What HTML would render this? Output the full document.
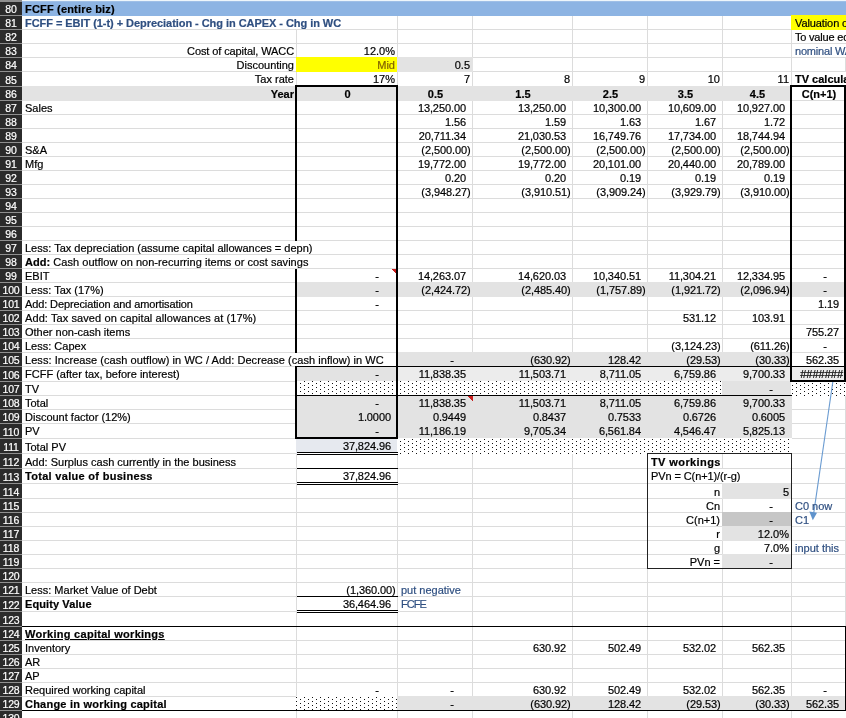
<!DOCTYPE html>
<html><head><meta charset="utf-8"><title>FCFF</title>
<style>
html,body{margin:0;padding:0;background:#fff}
#s{position:relative;width:846px;height:718px;overflow:hidden;background:#fff;font-family:"Liberation Sans",Arial,sans-serif;font-size:11px;color:#000}
#s svg{position:absolute;left:0;top:0}
.c{-webkit-text-stroke:0.2px;position:absolute;height:14px;line-height:14px;white-space:nowrap;padding:0 2px 0 3px;box-sizing:border-box;overflow:visible}
.c i{visibility:hidden;font-style:normal;padding-right:1px}
.n{letter-spacing:-0.1px;padding-right:1.5px}
.rh{position:absolute;left:0;width:22px;background:#2b2b2b;color:#fff;text-align:center;font-size:10.5px;letter-spacing:-0.15px;-webkit-text-stroke:0.2px #fff;box-sizing:content-box;white-space:nowrap;overflow:hidden}
#t{position:absolute;left:0;top:0;width:846px;height:718px;will-change:transform}
#hb{position:absolute;left:0;top:0;width:22px;height:718px;background:#8f8f8f}
</style></head><body>
<div id="s">
<svg width="846" height="718" viewBox="0 0 846 718" shape-rendering="crispEdges">
<defs><pattern id="dots" width="8" height="4" patternUnits="userSpaceOnUse"><rect width="8" height="4" fill="#fff"/><rect x="4" y="3" width="1" height="1" fill="#111"/><rect x="0" y="1" width="1" height="1" fill="#111"/></pattern></defs>
<rect x="22" y="1" width="824" height="1" fill="#dcdcdc"/>
<rect x="22" y="15" width="824" height="1" fill="#dcdcdc"/>
<rect x="22" y="29" width="824" height="1" fill="#dcdcdc"/>
<rect x="22" y="43" width="824" height="1" fill="#dcdcdc"/>
<rect x="22" y="57" width="824" height="1" fill="#dcdcdc"/>
<rect x="22" y="71" width="824" height="1" fill="#dcdcdc"/>
<rect x="22" y="86" width="824" height="1" fill="#dcdcdc"/>
<rect x="22" y="100" width="824" height="1" fill="#dcdcdc"/>
<rect x="22" y="114" width="824" height="1" fill="#dcdcdc"/>
<rect x="22" y="128" width="824" height="1" fill="#dcdcdc"/>
<rect x="22" y="142" width="824" height="1" fill="#dcdcdc"/>
<rect x="22" y="156" width="824" height="1" fill="#dcdcdc"/>
<rect x="22" y="170" width="824" height="1" fill="#dcdcdc"/>
<rect x="22" y="184" width="824" height="1" fill="#dcdcdc"/>
<rect x="22" y="198" width="824" height="1" fill="#dcdcdc"/>
<rect x="22" y="212" width="824" height="1" fill="#dcdcdc"/>
<rect x="22" y="226" width="824" height="1" fill="#dcdcdc"/>
<rect x="22" y="240" width="824" height="1" fill="#dcdcdc"/>
<rect x="22" y="254" width="824" height="1" fill="#dcdcdc"/>
<rect x="22" y="268" width="824" height="1" fill="#dcdcdc"/>
<rect x="22" y="282" width="824" height="1" fill="#dcdcdc"/>
<rect x="22" y="296" width="824" height="1" fill="#dcdcdc"/>
<rect x="22" y="310" width="824" height="1" fill="#dcdcdc"/>
<rect x="22" y="324" width="824" height="1" fill="#dcdcdc"/>
<rect x="22" y="338" width="824" height="1" fill="#dcdcdc"/>
<rect x="22" y="352" width="824" height="1" fill="#dcdcdc"/>
<rect x="22" y="366" width="824" height="1" fill="#dcdcdc"/>
<rect x="22" y="381" width="824" height="1" fill="#dcdcdc"/>
<rect x="22" y="395" width="824" height="1" fill="#dcdcdc"/>
<rect x="22" y="409" width="824" height="1" fill="#dcdcdc"/>
<rect x="22" y="423" width="824" height="1" fill="#dcdcdc"/>
<rect x="22" y="438" width="824" height="1" fill="#dcdcdc"/>
<rect x="22" y="453" width="824" height="1" fill="#dcdcdc"/>
<rect x="22" y="468" width="824" height="1" fill="#dcdcdc"/>
<rect x="22" y="483" width="824" height="1" fill="#dcdcdc"/>
<rect x="22" y="498" width="824" height="1" fill="#dcdcdc"/>
<rect x="22" y="512" width="824" height="1" fill="#dcdcdc"/>
<rect x="22" y="526" width="824" height="1" fill="#dcdcdc"/>
<rect x="22" y="540" width="824" height="1" fill="#dcdcdc"/>
<rect x="22" y="554" width="824" height="1" fill="#dcdcdc"/>
<rect x="22" y="568" width="824" height="1" fill="#dcdcdc"/>
<rect x="22" y="582" width="824" height="1" fill="#dcdcdc"/>
<rect x="22" y="596" width="824" height="1" fill="#dcdcdc"/>
<rect x="22" y="611" width="824" height="1" fill="#dcdcdc"/>
<rect x="22" y="626" width="824" height="1" fill="#dcdcdc"/>
<rect x="22" y="640" width="824" height="1" fill="#dcdcdc"/>
<rect x="22" y="654" width="824" height="1" fill="#dcdcdc"/>
<rect x="22" y="668" width="824" height="1" fill="#dcdcdc"/>
<rect x="22" y="682" width="824" height="1" fill="#dcdcdc"/>
<rect x="22" y="696" width="824" height="1" fill="#dcdcdc"/>
<rect x="22" y="710" width="824" height="1" fill="#dcdcdc"/>
<rect x="296" y="2" width="1" height="716" fill="#dcdcdc"/>
<rect x="397" y="2" width="1" height="716" fill="#dcdcdc"/>
<rect x="472" y="2" width="1" height="716" fill="#dcdcdc"/>
<rect x="572" y="2" width="1" height="716" fill="#dcdcdc"/>
<rect x="647" y="2" width="1" height="716" fill="#dcdcdc"/>
<rect x="722" y="2" width="1" height="716" fill="#dcdcdc"/>
<rect x="791" y="2" width="1" height="716" fill="#dcdcdc"/>
<rect x="845" y="58" width="1" height="14" fill="#dcdcdc"/>
<rect x="845" y="396" width="1" height="230" fill="#dcdcdc"/>
<rect x="296" y="16" width="1" height="13" fill="#fff"/>
<rect x="296" y="241" width="1" height="13" fill="#fff"/>
<rect x="296" y="255" width="1" height="13" fill="#fff"/>
<rect x="296" y="353" width="1" height="13" fill="#fff"/>
<rect x="722" y="469" width="1" height="14" fill="#fff"/>
<rect x="22" y="2" width="824" height="14" fill="#8db4e3"/>
<rect x="0" y="0" width="846" height="1" fill="#eef6fb"/>
<rect x="22" y="1" width="824" height="1" fill="#9fbfe6"/>
<rect x="791" y="15" width="55" height="15" fill="#ffff00"/>
<rect x="296" y="57" width="102" height="15" fill="#ffff00"/>
<rect x="397" y="57" width="76" height="15" fill="#e3e3e3"/>
<rect x="21" y="86" width="771" height="15" fill="#e3e3e3"/>
<rect x="296" y="282" width="550" height="15" fill="#e3e3e3"/>
<rect x="397" y="352" width="395" height="15" fill="#e3e3e3"/>
<rect x="296" y="366" width="102" height="16" fill="#e3e3e3"/>
<rect x="397" y="366" width="449" height="16" fill="#ececec"/>
<rect x="296" y="381" width="427" height="15" fill="url(#dots)"/>
<rect x="722" y="381" width="70" height="15" fill="#e3e3e3"/>
<rect x="791" y="381" width="55" height="15" fill="url(#dots)"/>
<rect x="296" y="395" width="496" height="44" fill="#e3e3e3"/>
<rect x="296" y="438" width="102" height="16" fill="#e6e9ef"/>
<rect x="397" y="438" width="395" height="16" fill="url(#dots)"/>
<rect x="722" y="483" width="70" height="16" fill="#e3e3e3"/>
<rect x="722" y="512" width="70" height="15" fill="#c6c6c6"/>
<rect x="722" y="526" width="70" height="15" fill="#e3e3e3"/>
<rect x="722" y="554" width="70" height="15" fill="#e3e3e3"/>
<rect x="296" y="696" width="102" height="15" fill="url(#dots)"/>
<rect x="397" y="696" width="449" height="15" fill="#e3e3e3"/>
<rect x="295" y="85" width="103" height="2" fill="#000"/>
<rect x="295" y="85" width="2" height="156" fill="#000"/>
<rect x="295" y="269" width="2" height="84" fill="#000"/>
<rect x="295" y="366" width="2" height="73" fill="#000"/>
<rect x="396" y="85" width="2" height="354" fill="#000"/>
<rect x="295" y="437" width="103" height="2" fill="#000"/>
<rect x="297" y="366" width="493" height="1" fill="#000"/>
<rect x="297" y="395" width="495" height="1" fill="#000"/>
<rect x="790" y="85" width="56" height="2" fill="#000"/>
<rect x="790" y="85" width="2" height="297" fill="#000"/>
<rect x="844" y="85" width="2" height="297" fill="#000"/>
<rect x="790" y="380" width="56" height="2" fill="#000"/>
<rect x="792" y="366" width="52" height="1" fill="#000"/>
<rect x="297" y="452" width="101" height="1" fill="#000"/>
<rect x="297" y="454" width="101" height="1" fill="#000"/>
<rect x="297" y="453" width="101" height="1" fill="#fff"/>
<rect x="297" y="468" width="101" height="1" fill="#000"/>
<rect x="297" y="482" width="101" height="1" fill="#000"/>
<rect x="297" y="484" width="101" height="1" fill="#000"/>
<rect x="297" y="483" width="101" height="1" fill="#fff"/>
<rect x="297" y="596" width="101" height="1" fill="#000"/>
<rect x="297" y="610" width="101" height="1" fill="#000"/>
<rect x="297" y="612" width="101" height="1" fill="#000"/>
<rect x="297" y="611" width="101" height="1" fill="#fff"/>
<rect x="647" y="453" width="145" height="1" fill="#222"/>
<rect x="647" y="568" width="145" height="1" fill="#222"/>
<rect x="647" y="453" width="1" height="116" fill="#222"/>
<rect x="791" y="453" width="1" height="116" fill="#222"/>
<rect x="22" y="626" width="824" height="1" fill="#000"/>
<rect x="22" y="710" width="824" height="1" fill="#000"/>
<rect x="845" y="626" width="1" height="85" fill="#000"/>
<polygon points="391,269 396,269 396,274" fill="#c81e1e"/>
<polygon points="467.5,396 472.5,396 472.5,401" fill="#c81e1e"/>
<g shape-rendering="auto"><line x1="832.8" y1="382" x2="813.6" y2="514" stroke="#6a9bd1" stroke-width="1.1"/><polygon points="812.8,520.3 809.3,511.6 817.0,512.8" fill="#5f93cc"/></g>
</svg>
<div id="t">
<div id="hb"></div>
<div class="rh" style="top:2px;height:13px;line-height:15px;padding-top:0px">80</div>
<div class="rh" style="top:16px;height:13px;line-height:15px;padding-top:0px">81</div>
<div class="rh" style="top:30px;height:13px;line-height:15px;padding-top:0px">82</div>
<div class="rh" style="top:44px;height:13px;line-height:15px;padding-top:0px">83</div>
<div class="rh" style="top:58px;height:13px;line-height:15px;padding-top:0px">84</div>
<div class="rh" style="top:72px;height:14px;line-height:16px;padding-top:0px">85</div>
<div class="rh" style="top:87px;height:13px;line-height:15px;padding-top:0px">86</div>
<div class="rh" style="top:101px;height:13px;line-height:15px;padding-top:0px">87</div>
<div class="rh" style="top:115px;height:13px;line-height:15px;padding-top:0px">88</div>
<div class="rh" style="top:129px;height:13px;line-height:15px;padding-top:0px">89</div>
<div class="rh" style="top:143px;height:13px;line-height:15px;padding-top:0px">90</div>
<div class="rh" style="top:157px;height:13px;line-height:15px;padding-top:0px">91</div>
<div class="rh" style="top:171px;height:13px;line-height:15px;padding-top:0px">92</div>
<div class="rh" style="top:185px;height:13px;line-height:15px;padding-top:0px">93</div>
<div class="rh" style="top:199px;height:13px;line-height:15px;padding-top:0px">94</div>
<div class="rh" style="top:213px;height:13px;line-height:15px;padding-top:0px">95</div>
<div class="rh" style="top:227px;height:13px;line-height:15px;padding-top:0px">96</div>
<div class="rh" style="top:241px;height:13px;line-height:15px;padding-top:0px">97</div>
<div class="rh" style="top:255px;height:13px;line-height:15px;padding-top:0px">98</div>
<div class="rh" style="top:269px;height:13px;line-height:15px;padding-top:0px">99</div>
<div class="rh" style="top:283px;height:13px;line-height:15px;padding-top:0px">100</div>
<div class="rh" style="top:297px;height:13px;line-height:15px;padding-top:0px">101</div>
<div class="rh" style="top:311px;height:13px;line-height:15px;padding-top:0px">102</div>
<div class="rh" style="top:325px;height:13px;line-height:15px;padding-top:0px">103</div>
<div class="rh" style="top:339px;height:13px;line-height:15px;padding-top:0px">104</div>
<div class="rh" style="top:353px;height:13px;line-height:15px;padding-top:0px">105</div>
<div class="rh" style="top:367px;height:14px;line-height:16px;padding-top:0px">106</div>
<div class="rh" style="top:382px;height:13px;line-height:15px;padding-top:0px">107</div>
<div class="rh" style="top:396px;height:13px;line-height:15px;padding-top:0px">108</div>
<div class="rh" style="top:410px;height:13px;line-height:15px;padding-top:0px">109</div>
<div class="rh" style="top:424px;height:14px;line-height:16px;padding-top:0px">110</div>
<div class="rh" style="top:439px;height:14px;line-height:16px;padding-top:0px">111</div>
<div class="rh" style="top:454px;height:14px;line-height:16px;padding-top:0px">112</div>
<div class="rh" style="top:469px;height:14px;line-height:16px;padding-top:0px">113</div>
<div class="rh" style="top:484px;height:14px;line-height:16px;padding-top:0px">114</div>
<div class="rh" style="top:499px;height:13px;line-height:15px;padding-top:0px">115</div>
<div class="rh" style="top:513px;height:13px;line-height:15px;padding-top:0px">116</div>
<div class="rh" style="top:527px;height:13px;line-height:15px;padding-top:0px">117</div>
<div class="rh" style="top:541px;height:13px;line-height:15px;padding-top:0px">118</div>
<div class="rh" style="top:555px;height:13px;line-height:15px;padding-top:0px">119</div>
<div class="rh" style="top:569px;height:13px;line-height:15px;padding-top:0px">120</div>
<div class="rh" style="top:583px;height:13px;line-height:15px;padding-top:0px">121</div>
<div class="rh" style="top:597px;height:14px;line-height:16px;padding-top:0px">122</div>
<div class="rh" style="top:612px;height:14px;line-height:16px;padding-top:0px">123</div>
<div class="rh" style="top:627px;height:13px;line-height:15px;padding-top:0px">124</div>
<div class="rh" style="top:641px;height:13px;line-height:15px;padding-top:0px">125</div>
<div class="rh" style="top:655px;height:13px;line-height:15px;padding-top:0px">126</div>
<div class="rh" style="top:669px;height:13px;line-height:15px;padding-top:0px">127</div>
<div class="rh" style="top:683px;height:13px;line-height:15px;padding-top:0px">128</div>
<div class="rh" style="top:697px;height:13px;line-height:15px;padding-top:0px">129</div>
<div class="rh" style="top:711px;height:13px;line-height:15px;padding-top:0px">130</div>
<div class="c" style="left:22px;top:2px;width:823px;font-weight:bold;letter-spacing:0.18px;">FCFF (entire biz)</div>
<div class="c" style="left:22px;top:16px;width:769px;font-weight:bold;color:#2f4f80;letter-spacing:-0.05px;">FCFF = EBIT (1-t) + Depreciation - Chg in CAPEX - Chg in WC</div>
<div class="c" style="left:792px;top:16px;width:108px;letter-spacing:-0.1px;">Valuation cutoff</div>
<div class="c" style="left:792px;top:30px;width:108px;letter-spacing:-0.2px;">To value equity</div>
<div class="c" style="left:792px;top:44px;width:108px;color:#2f4f80;letter-spacing:-0.2px;">nominal WACC</div>
<div class="c" style="left:22px;top:44px;width:274px;text-align:right;letter-spacing:-0.1px;">Cost of capital, WACC</div>
<div class="c" style="left:297px;top:44px;width:100px;text-align:right;">12.0%</div>
<div class="c" style="left:22px;top:58px;width:274px;text-align:right;">Discounting</div>
<div class="c" style="left:297px;top:58px;width:100px;text-align:right;color:#806000;">Mid</div>
<div class="c" style="left:398px;top:58px;width:74px;text-align:right;">0.5</div>
<div class="c" style="left:22px;top:72px;width:274px;text-align:right;">Tax rate</div>
<div class="c" style="left:297px;top:72px;width:100px;text-align:right;">17%</div>
<div class="c" style="left:398px;top:72px;width:74px;text-align:right;">7</div>
<div class="c" style="left:473px;top:72px;width:99px;text-align:right;">8</div>
<div class="c" style="left:573px;top:72px;width:74px;text-align:right;">9</div>
<div class="c" style="left:648px;top:72px;width:74px;text-align:right;">10</div>
<div class="c" style="left:723px;top:72px;width:68px;text-align:right;">11</div>
<div class="c" style="left:792px;top:72px;width:108px;font-weight:bold;">TV calculation</div>
<div class="c" style="left:22px;top:87px;width:274px;text-align:right;font-weight:bold;">Year</div>
<div class="c" style="left:297px;top:87px;width:100px;text-align:center;font-weight:bold;">0</div>
<div class="c" style="left:398px;top:87px;width:74px;text-align:center;font-weight:bold;">0.5</div>
<div class="c" style="left:473px;top:87px;width:99px;text-align:center;font-weight:bold;">1.5</div>
<div class="c" style="left:573px;top:87px;width:74px;text-align:center;font-weight:bold;">2.5</div>
<div class="c" style="left:648px;top:87px;width:74px;text-align:center;font-weight:bold;">3.5</div>
<div class="c" style="left:723px;top:87px;width:68px;text-align:center;font-weight:bold;">4.5</div>
<div class="c" style="left:792px;top:87px;width:53px;text-align:center;font-weight:bold;">C(n+1)</div>
<div class="c n" style="left:398px;top:101px;width:74px;text-align:right;">13,250.00<i>)</i></div>
<div class="c n" style="left:473px;top:101px;width:99px;text-align:right;">13,250.00<i>)</i></div>
<div class="c n" style="left:573px;top:101px;width:74px;text-align:right;">10,300.00<i>)</i></div>
<div class="c n" style="left:648px;top:101px;width:74px;text-align:right;">10,609.00<i>)</i></div>
<div class="c n" style="left:723px;top:101px;width:68px;text-align:right;">10,927.00<i>)</i></div>
<div class="c n" style="left:398px;top:115px;width:74px;text-align:right;">1.56<i>)</i></div>
<div class="c n" style="left:473px;top:115px;width:99px;text-align:right;">1.59<i>)</i></div>
<div class="c n" style="left:573px;top:115px;width:74px;text-align:right;">1.63<i>)</i></div>
<div class="c n" style="left:648px;top:115px;width:74px;text-align:right;">1.67<i>)</i></div>
<div class="c n" style="left:723px;top:115px;width:68px;text-align:right;">1.72<i>)</i></div>
<div class="c n" style="left:398px;top:129px;width:74px;text-align:right;">20,711.34<i>)</i></div>
<div class="c n" style="left:473px;top:129px;width:99px;text-align:right;">21,030.53<i>)</i></div>
<div class="c n" style="left:573px;top:129px;width:74px;text-align:right;">16,749.76<i>)</i></div>
<div class="c n" style="left:648px;top:129px;width:74px;text-align:right;">17,734.00<i>)</i></div>
<div class="c n" style="left:723px;top:129px;width:68px;text-align:right;">18,744.94<i>)</i></div>
<div class="c n" style="left:398px;top:143px;width:74px;text-align:right;">(2,500.00)</div>
<div class="c n" style="left:473px;top:143px;width:99px;text-align:right;">(2,500.00)</div>
<div class="c n" style="left:573px;top:143px;width:74px;text-align:right;">(2,500.00)</div>
<div class="c n" style="left:648px;top:143px;width:74px;text-align:right;">(2,500.00)</div>
<div class="c n" style="left:723px;top:143px;width:68px;text-align:right;">(2,500.00)</div>
<div class="c n" style="left:398px;top:157px;width:74px;text-align:right;">19,772.00<i>)</i></div>
<div class="c n" style="left:473px;top:157px;width:99px;text-align:right;">19,772.00<i>)</i></div>
<div class="c n" style="left:573px;top:157px;width:74px;text-align:right;">20,101.00<i>)</i></div>
<div class="c n" style="left:648px;top:157px;width:74px;text-align:right;">20,440.00<i>)</i></div>
<div class="c n" style="left:723px;top:157px;width:68px;text-align:right;">20,789.00<i>)</i></div>
<div class="c n" style="left:398px;top:171px;width:74px;text-align:right;">0.20<i>)</i></div>
<div class="c n" style="left:473px;top:171px;width:99px;text-align:right;">0.20<i>)</i></div>
<div class="c n" style="left:573px;top:171px;width:74px;text-align:right;">0.19<i>)</i></div>
<div class="c n" style="left:648px;top:171px;width:74px;text-align:right;">0.19<i>)</i></div>
<div class="c n" style="left:723px;top:171px;width:68px;text-align:right;">0.19<i>)</i></div>
<div class="c n" style="left:398px;top:185px;width:74px;text-align:right;">(3,948.27)</div>
<div class="c n" style="left:473px;top:185px;width:99px;text-align:right;">(3,910.51)</div>
<div class="c n" style="left:573px;top:185px;width:74px;text-align:right;">(3,909.24)</div>
<div class="c n" style="left:648px;top:185px;width:74px;text-align:right;">(3,929.79)</div>
<div class="c n" style="left:723px;top:185px;width:68px;text-align:right;">(3,910.00)</div>
<div class="c n" style="left:398px;top:269px;width:74px;text-align:right;">14,263.07<i>)</i></div>
<div class="c n" style="left:473px;top:269px;width:99px;text-align:right;">14,620.03<i>)</i></div>
<div class="c n" style="left:573px;top:269px;width:74px;text-align:right;">10,340.51<i>)</i></div>
<div class="c n" style="left:648px;top:269px;width:74px;text-align:right;">11,304.21<i>)</i></div>
<div class="c n" style="left:723px;top:269px;width:68px;text-align:right;">12,334.95<i>)</i></div>
<div class="c n" style="left:398px;top:283px;width:74px;text-align:right;">(2,424.72)</div>
<div class="c n" style="left:473px;top:283px;width:99px;text-align:right;">(2,485.40)</div>
<div class="c n" style="left:573px;top:283px;width:74px;text-align:right;">(1,757.89)</div>
<div class="c n" style="left:648px;top:283px;width:74px;text-align:right;">(1,921.72)</div>
<div class="c n" style="left:723px;top:283px;width:68px;text-align:right;">(2,096.94)</div>
<div class="c n" style="left:648px;top:311px;width:74px;text-align:right;">531.12<i>)</i></div>
<div class="c n" style="left:723px;top:311px;width:68px;text-align:right;">103.91<i>)</i></div>
<div class="c n" style="left:648px;top:339px;width:74px;text-align:right;">(3,124.23)</div>
<div class="c n" style="left:723px;top:339px;width:68px;text-align:right;">(611.26)</div>
<div class="c n" style="left:398px;top:353px;width:74px;text-align:right;">-<i>00)</i></div>
<div class="c n" style="left:473px;top:353px;width:99px;text-align:right;">(630.92)</div>
<div class="c n" style="left:573px;top:353px;width:74px;text-align:right;">128.42<i>)</i></div>
<div class="c n" style="left:648px;top:353px;width:74px;text-align:right;">(29.53)</div>
<div class="c n" style="left:723px;top:353px;width:68px;text-align:right;">(30.33)</div>
<div class="c n" style="left:398px;top:367px;width:74px;text-align:right;">11,838.35<i>)</i></div>
<div class="c n" style="left:473px;top:367px;width:99px;text-align:right;">11,503.71<i>)</i></div>
<div class="c n" style="left:573px;top:367px;width:74px;text-align:right;">8,711.05<i>)</i></div>
<div class="c n" style="left:648px;top:367px;width:74px;text-align:right;">6,759.86<i>)</i></div>
<div class="c n" style="left:723px;top:367px;width:68px;text-align:right;">9,700.33<i>)</i></div>
<div class="c n" style="left:723px;top:382px;width:68px;text-align:right;">-<i>00)</i></div>
<div class="c n" style="left:398px;top:396px;width:74px;text-align:right;">11,838.35<i>)</i></div>
<div class="c n" style="left:473px;top:396px;width:99px;text-align:right;">11,503.71<i>)</i></div>
<div class="c n" style="left:573px;top:396px;width:74px;text-align:right;">8,711.05<i>)</i></div>
<div class="c n" style="left:648px;top:396px;width:74px;text-align:right;">6,759.86<i>)</i></div>
<div class="c n" style="left:723px;top:396px;width:68px;text-align:right;">9,700.33<i>)</i></div>
<div class="c n" style="left:398px;top:410px;width:74px;text-align:right;">0.9449<i>)</i></div>
<div class="c n" style="left:473px;top:410px;width:99px;text-align:right;">0.8437<i>)</i></div>
<div class="c n" style="left:573px;top:410px;width:74px;text-align:right;">0.7533<i>)</i></div>
<div class="c n" style="left:648px;top:410px;width:74px;text-align:right;">0.6726<i>)</i></div>
<div class="c n" style="left:723px;top:410px;width:68px;text-align:right;">0.6005<i>)</i></div>
<div class="c n" style="left:398px;top:424px;width:74px;text-align:right;">11,186.19<i>)</i></div>
<div class="c n" style="left:473px;top:424px;width:99px;text-align:right;">9,705.34<i>)</i></div>
<div class="c n" style="left:573px;top:424px;width:74px;text-align:right;">6,561.84<i>)</i></div>
<div class="c n" style="left:648px;top:424px;width:74px;text-align:right;">4,546.47<i>)</i></div>
<div class="c n" style="left:723px;top:424px;width:68px;text-align:right;">5,825.13<i>)</i></div>
<div class="c n" style="left:473px;top:641px;width:99px;text-align:right;">630.92<i>)</i></div>
<div class="c n" style="left:573px;top:641px;width:74px;text-align:right;">502.49<i>)</i></div>
<div class="c n" style="left:648px;top:641px;width:74px;text-align:right;">532.02<i>)</i></div>
<div class="c n" style="left:723px;top:641px;width:68px;text-align:right;">562.35<i>)</i></div>
<div class="c n" style="left:398px;top:683px;width:74px;text-align:right;">-<i>00)</i></div>
<div class="c n" style="left:473px;top:683px;width:99px;text-align:right;">630.92<i>)</i></div>
<div class="c n" style="left:573px;top:683px;width:74px;text-align:right;">502.49<i>)</i></div>
<div class="c n" style="left:648px;top:683px;width:74px;text-align:right;">532.02<i>)</i></div>
<div class="c n" style="left:723px;top:683px;width:68px;text-align:right;">562.35<i>)</i></div>
<div class="c n" style="left:398px;top:697px;width:74px;text-align:right;">-<i>00)</i></div>
<div class="c n" style="left:473px;top:697px;width:99px;text-align:right;">(630.92)</div>
<div class="c n" style="left:573px;top:697px;width:74px;text-align:right;">128.42<i>)</i></div>
<div class="c n" style="left:648px;top:697px;width:74px;text-align:right;">(29.53)</div>
<div class="c n" style="left:723px;top:697px;width:68px;text-align:right;">(30.33)</div>
<div class="c" style="left:22px;top:101px;width:274px;">Sales</div>
<div class="c" style="left:22px;top:143px;width:274px;">S&amp;A</div>
<div class="c" style="left:22px;top:157px;width:274px;">Mfg</div>
<div class="c" style="left:22px;top:241px;width:274px;">Less: Tax depreciation (assume capital allowances = depn)</div>
<div class="c" style="left:22px;top:269px;width:274px;">EBIT</div>
<div class="c" style="left:22px;top:283px;width:274px;">Less: Tax (17%)</div>
<div class="c" style="left:22px;top:297px;width:274px;letter-spacing:-0.12px;">Add: Depreciation and amortisation</div>
<div class="c" style="left:22px;top:311px;width:274px;letter-spacing:0.09px;">Add: Tax saved on capital allowances at (17%)</div>
<div class="c" style="left:22px;top:325px;width:274px;">Other non-cash items</div>
<div class="c" style="left:22px;top:339px;width:274px;">Less: Capex</div>
<div class="c" style="left:22px;top:367px;width:274px;">FCFF (after tax, before interest)</div>
<div class="c" style="left:22px;top:382px;width:274px;">TV</div>
<div class="c" style="left:22px;top:396px;width:274px;">Total</div>
<div class="c" style="left:22px;top:410px;width:274px;">Discount factor (12%)</div>
<div class="c" style="left:22px;top:424px;width:274px;">PV</div>
<div class="c" style="left:22px;top:440px;width:274px;">Total PV</div>
<div class="c" style="left:22px;top:455px;width:274px;">Add: Surplus cash currently in the business</div>
<div class="c" style="left:22px;top:583px;width:274px;">Less: Market Value of Debt</div>
<div class="c" style="left:22px;top:641px;width:274px;">Inventory</div>
<div class="c" style="left:22px;top:655px;width:274px;">AR</div>
<div class="c" style="left:22px;top:669px;width:274px;">AP</div>
<div class="c" style="left:22px;top:683px;width:274px;">Required working capital</div>
<div class="c" style="left:22px;top:255px;width:274px;letter-spacing:0.04px;"><b>Add:</b> Cash outflow on non-recurring items or cost savings</div>
<div class="c" style="left:22px;top:353px;width:375px;letter-spacing:0.05px;">Less: Increase (cash outflow) in WC / Add: Decrease (cash inflow) in WC</div>
<div class="c" style="left:22px;top:469px;width:274px;font-weight:bold;letter-spacing:0.3px;">Total value of business</div>
<div class="c" style="left:22px;top:597px;width:274px;font-weight:bold;letter-spacing:0.1px;">Equity Value</div>
<div class="c" style="left:22px;top:627px;width:274px;font-weight:bold;letter-spacing:0.28px;"><u>Working capital workings</u></div>
<div class="c" style="left:22px;top:697px;width:274px;font-weight:bold;letter-spacing:0.22px;">Change in working capital</div>
<div class="c n" style="left:297px;top:269px;width:100px;text-align:right;">-<i>00)</i></div>
<div class="c n" style="left:297px;top:283px;width:100px;text-align:right;">-<i>00)</i></div>
<div class="c n" style="left:297px;top:297px;width:100px;text-align:right;">-<i>00)</i></div>
<div class="c n" style="left:297px;top:367px;width:100px;text-align:right;">-<i>00)</i></div>
<div class="c n" style="left:297px;top:396px;width:100px;text-align:right;">-<i>00)</i></div>
<div class="c n" style="left:297px;top:424px;width:100px;text-align:right;">-<i>00)</i></div>
<div class="c n" style="left:297px;top:683px;width:100px;text-align:right;">-<i>00)</i></div>
<div class="c n" style="left:297px;top:410px;width:100px;text-align:right;">1.0000<i>)</i></div>
<div class="c n" style="left:297px;top:439px;width:100px;text-align:right;">37,824.96<i>)</i></div>
<div class="c n" style="left:297px;top:469px;width:100px;text-align:right;">37,824.96<i>)</i></div>
<div class="c n" style="left:297px;top:583px;width:100px;text-align:right;">(1,360.00)</div>
<div class="c n" style="left:297px;top:597px;width:100px;text-align:right;">36,464.96<i>)</i></div>
<div class="c n" style="left:792px;top:269px;width:53px;text-align:right;">-<i>00)</i></div>
<div class="c n" style="left:792px;top:283px;width:53px;text-align:right;">-<i>00)</i></div>
<div class="c n" style="left:792px;top:297px;width:53px;text-align:right;">1.19<i>)</i></div>
<div class="c n" style="left:792px;top:325px;width:53px;text-align:right;">755.27<i>)</i></div>
<div class="c n" style="left:792px;top:339px;width:53px;text-align:right;">-<i>00)</i></div>
<div class="c n" style="left:792px;top:353px;width:53px;text-align:right;">562.35<i>)</i></div>
<div class="c" style="left:792px;top:367px;width:53px;text-align:right;letter-spacing:0px;-webkit-text-stroke:0.2px #000;">#######</div>
<div class="c n" style="left:792px;top:683px;width:53px;text-align:right;">-<i>00)</i></div>
<div class="c n" style="left:792px;top:697px;width:53px;text-align:right;">562.35<i>)</i></div>
<div class="c" style="left:648px;top:455px;width:143px;font-weight:bold;letter-spacing:0.4px;">TV workings</div>
<div class="c" style="left:648px;top:469px;width:143px;letter-spacing:-0.1px;">PVn = C(n+1)/(r-g)</div>
<div class="c" style="left:648px;top:485px;width:74px;text-align:right;">n</div>
<div class="c" style="left:648px;top:499px;width:74px;text-align:right;">Cn</div>
<div class="c" style="left:648px;top:513px;width:74px;text-align:right;">C(n+1)</div>
<div class="c" style="left:648px;top:527px;width:74px;text-align:right;">r</div>
<div class="c" style="left:648px;top:541px;width:74px;text-align:right;">g</div>
<div class="c" style="left:648px;top:555px;width:74px;text-align:right;">PVn =</div>
<div class="c" style="left:723px;top:485px;width:68px;text-align:right;">5</div>
<div class="c n" style="left:723px;top:499px;width:68px;text-align:right;">-<i>00)</i></div>
<div class="c n" style="left:723px;top:513px;width:68px;text-align:right;">-<i>00)</i></div>
<div class="c" style="left:723px;top:527px;width:68px;text-align:right;">12.0%</div>
<div class="c" style="left:723px;top:541px;width:68px;text-align:right;">7.0%</div>
<div class="c n" style="left:723px;top:555px;width:68px;text-align:right;">-<i>00)</i></div>
<div class="c" style="left:792px;top:499px;width:108px;color:#2f4f80;">C0 now</div>
<div class="c" style="left:792px;top:513px;width:108px;color:#2f4f80;">C1</div>
<div class="c" style="left:792px;top:541px;width:108px;color:#2f4f80;">input this</div>
<div class="c" style="left:398px;top:583px;width:174px;color:#2f4f80;">put negative</div>
<div class="c" style="left:398px;top:597px;width:74px;color:#2f4f80;letter-spacing:-1.0px;">FCFE</div>
</div>
</div>
</body></html>
